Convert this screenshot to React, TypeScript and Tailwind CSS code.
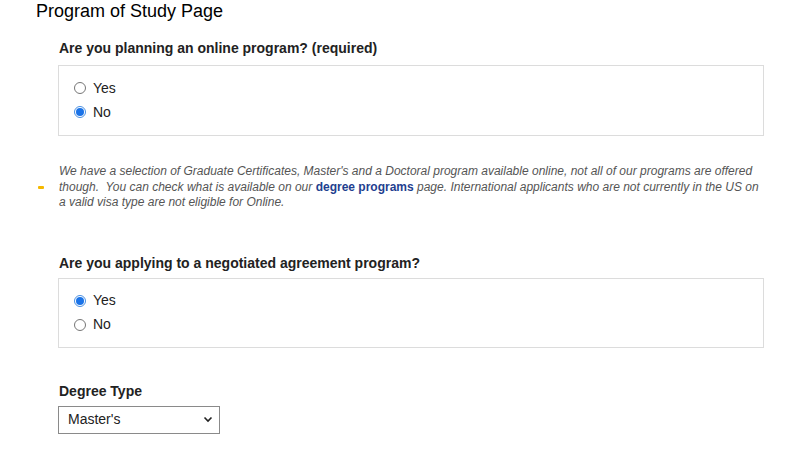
import React from "react";

function Radio({ checked, label }: { checked: boolean; label: string }) {
  return (
    <div className="flex items-center h-[24px]">
      {checked ? (
        <span className="w-[12px] h-[12px] rounded-full border border-[#4a90e2] bg-white flex items-center justify-center ml-[15px]">
          <span className="w-[8px] h-[8px] rounded-full bg-[#1a73e8]" />
        </span>
      ) : (
        <span className="w-[12px] h-[12px] rounded-full border border-[#767676] bg-white ml-[15px]" />
      )}
      <span className="ml-[7px] text-[14px] text-[#222]">{label}</span>
    </div>
  );
}

export default function App() {
  return (
    <div
      className="w-[800px] h-[467px] bg-white overflow-hidden relative"
      style={{ fontFamily: '"Liberation Sans", Arial, sans-serif' }}
    >
      <div className="pl-[36px] pt-[1px] text-[18px] text-black leading-[20px]">Program of Study Page</div>
      <div className="pl-[58px] w-[764px]">
        <div className="mt-[19px] text-[14px] font-bold text-[#222] leading-[16px] pl-[1px]">
          Are you planning an online program? (required)
        </div>
        <div className="mt-[9px] h-[71px] border border-[#dcdcdc] pt-[10px]">
          <Radio checked={false} label="Yes" />
          <Radio checked={true} label="No" />
        </div>
      </div>
      <div className="flex mt-[28px]">
        <div className="w-[59px] flex items-center">
          <span className="ml-[38px] w-[6px] h-[3px] bg-[#f5b800] rounded-[1px]" />
        </div>
        <p className="w-[720px] text-[12px] italic text-[#555] leading-[15.5px]">
          We have a selection of Graduate Certificates, Master's and a Doctoral program available online, not all of our programs are offered
          <br />
          though.&nbsp; You can check what is available on our{" "}
          <span className="not-italic font-bold text-[#1f3f8f]">degree programs</span> page. International applicants who are not currently in the US on
          <br />
          a valid visa type are not eligible for Online.
        </p>
      </div>
      <div className="pl-[58px] w-[764px]">
        <div className="mt-[44px] text-[14px] font-bold text-[#222] leading-[16px] pl-[1px]">
          Are you applying to a negotiated agreement program?
        </div>
        <div className="mt-[7px] h-[70px] border border-[#dcdcdc] pt-[10px]">
          <Radio checked={true} label="Yes" />
          <Radio checked={false} label="No" />
        </div>
        <div className="mt-[35px] text-[14px] font-bold text-[#222] leading-[16px] pl-[1px]">Degree Type</div>
        <div className="mt-[7px] w-[162px] h-[28px] border border-[#8a8a8a] flex items-center justify-between pl-[9px] pr-[6px] bg-white">
          <span className="text-[14px] text-[#222]">Master's</span>
          <svg width="10" height="7" viewBox="0 0 10 7" fill="none">
            <path d="M1.5 1.5 L5 5 L8.5 1.5" stroke="#222" strokeWidth="1.6" />
          </svg>
        </div>
      </div>
    </div>
  );
}
